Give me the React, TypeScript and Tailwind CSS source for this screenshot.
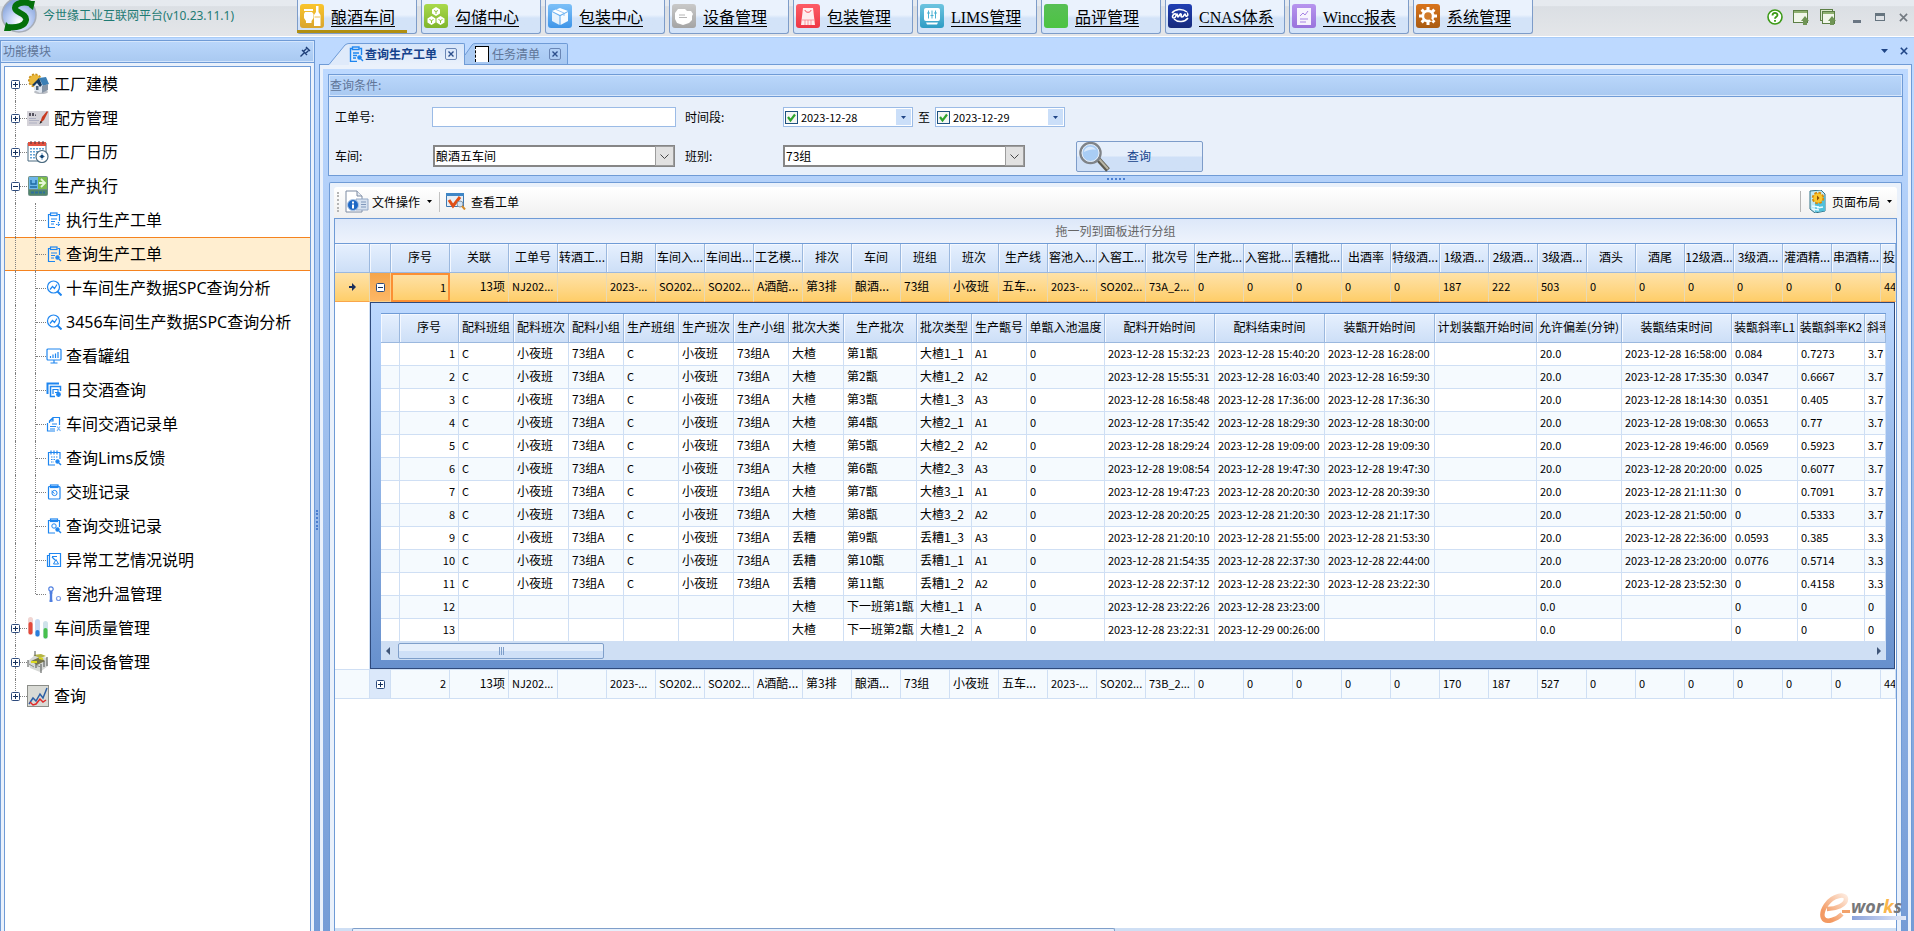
import { type ReactNode, useState } from "react";
import clsx from "clsx";

const fontUi = "font-['Noto_Sans_CJK_SC',sans-serif]";
const fontTree = "font-['Noto_Sans','Noto_Sans_CJK_SC',sans-serif]";
const fontMenu = "font-['Liberation_Serif','Noto_Sans_CJK_SC',serif]";

/* ---------- top menu ---------- */

const menuItems: { title: string; color: string; icon: ReactNode }[] = [
  {
    title: "酿酒车间",
    color: "from-[#fac52d] to-[#d9a52e]",
    icon: (
      <>
        <path d="M4 5h9v2h-9zM5 8h7l1.500 2v4l-2 3v2H6v-2l-2-3v-4z" />
        <path d="M16 2h2.500v6l2 3v11h-6.500V11l2-3z" />
        <path d="M14.500 13h5.500" stroke="#e6b02d" strokeWidth="0.8" />
      </>
    ),
  },
  {
    title: "勾储中心",
    color: "from-[#a9d94b] to-[#7fb52c]",
    icon: (
      <>
        <path d="M12 3l4 2.500v4L12 12 8 9.500v-4z" />
        <path d="M7.500 12l4 2.500v4l-4 2.500-4-2.500v-4z" />
        <path d="M16.500 12l4 2.500v4l-4 2.500-4-2.500v-4z" />
        <path d="M10 6.500l2 1 2-1M12 7.500V10M5.500 15.500l2 1 2-1M7.500 16.500V19M14.500 15.500l2 1 2-1M16.500 16.500V19" stroke="#8dc236" strokeWidth="1" fill="none" />
      </>
    ),
  },
  {
    title: "包装中心",
    color: "from-[#7cc0f8] to-[#3e95e8]",
    icon: (
      <>
        <path d="M12 4l8 3-8 4-8-4z" />
        <path d="M4 8l7.500 4v9L4 17z" opacity="0.85" />
        <path d="M20 8l-7.500 4v9l7.500-4z" opacity="0.95" />
        <path d="M8 5.500l8 3.500v3" stroke="#7cb9f2" strokeWidth="0.8" fill="none" />
      </>
    ),
  },
  {
    title: "设备管理",
    color: "from-[#c9c9c9] to-[#a4a4a4]",
    icon: (
      <>
        <path d="M6 5h7l2 2h4l2 3-1 2v4l-3 3-6 2-6-2-2-4V9z" />
        <path d="M7 11h6M7 13.500h8" stroke="#b5b5b5" strokeWidth="1" />
      </>
    ),
  },
  {
    title: "包装管理",
    color: "from-[#fd5c66] to-[#ee3545]",
    icon: (
      <>
        <path d="M7 4h10l2 17H5z" opacity="0.9" />
        <path d="M9 6c0 3 6 3 6 0" stroke="#f7505d" strokeWidth="1" fill="none" />
        <path d="M6 16h12M9 16v5M12 16v5M15 16v5" stroke="#f7808a" strokeWidth="0.8" />
      </>
    ),
  },
  {
    title: "LIMS管理",
    color: "from-[#6cc4e0] to-[#2c9cc4]",
    icon: (
      <>
        <rect x="4" y="4" width="16" height="13" rx="2" />
        <path d="M6 18.500h12l-1 2H7z" />
        <path d="M8.500 6.500v8M12 6.500v8M15.500 6.500v8M7 9h3M10.500 11.500h3M14 9h3" stroke="#4bb0d2" strokeWidth="1" />
      </>
    ),
  },
  { title: "品评管理", color: "from-[#58bf55] to-[#4cc442]", icon: null },
  {
    title: "CNAS体系",
    color: "from-[#1f3fb4] to-[#172a7c]",
    icon: (
      <>
        <path d="M4 9c3-4 10-5 15-1M20 14c-3 4-10 5-14 1" stroke="#fff" strokeWidth="1.500" fill="none" />
        <path d="M8 10c-3-1-5 4-2 4 2 0 2-4 3-4s0 3 1 3 2-4 3-3-1 3 1 3 2-3 3-3 0 3 2 2 0-3 1-3" stroke="#fff" strokeWidth="1.600" fill="none" />
      </>
    ),
  },
  {
    title: "Wincc报表",
    color: "from-[#b794ee] to-[#9973dc]",
    icon: (
      <>
        <rect x="5" y="4" width="14" height="17" opacity="0.9" />
        <path d="M8 12l3-3 2 2 3-4M8 15h8M8 18h6" stroke="#a682e4" strokeWidth="1" fill="none" />
      </>
    ),
  },
  {
    title: "系统管理",
    color: "from-[#d9741c] to-[#a95b12]",
    icon: (
      <>
        <g stroke="#fff" strokeWidth="3">
          <path d="M12 3v18M3 12h18M5.600 5.600l12.800 12.800M18.400 5.600L5.600 18.400" />
        </g>
        <circle cx="12" cy="12" r="6.500" />
        <circle cx="12" cy="12" r="3.800" fill="#d07a2a" />
        <path d="M13 13l3 4" stroke="#d07a2a" strokeWidth="2" />
      </>
    ),
  },
];

function Logo() {
  return (
    <svg className="h-[34px] w-[38px] shrink-0" viewBox="0 0 38 34">
      <defs>
        <radialGradient id="orb" cx="50%" cy="70%" r="60%">
          <stop offset="0" stopColor="#ffffff" />
          <stop offset="0.6" stopColor="#b9ccf3" />
          <stop offset="1" stopColor="#8ea9dd" />
        </radialGradient>
      </defs>
      <circle cx="19" cy="15" r="17" fill="url(#orb)" stroke="#a7adb8" strokeWidth="1.500" />
      <path
        d="M31 4C24 1 15 3 15 8c0 5 12 5 11 12-1 6-9 8-18 7"
        fill="none"
        stroke="#04700c"
        strokeWidth="6"
      />
      <path d="M29 1l6 0-2 9-4-3zM4 31l2-9 3 3 2 6z" fill="#04700c" />
    </svg>
  );
}

function TopBar() {
  return (
    <header className="flex h-[38px] shrink-0 items-start border-b border-[#a9ccf7] bg-linear-to-b from-[#e6eaef] from-15% via-[#dbdfe4] via-18% to-[#e4e6e9] shadow-[inset_0_-1px_0_#fff]">
      <Logo />
      <h1 className="ml-[5px] w-[254px] shrink-0 text-[12px] leading-8 text-[#1e7b74] font-['Noto_Sans','Noto_Sans_CJK_SC',sans-serif]">
        今世缘工业互联网平台(v10.23.11.1)
      </h1>
      <nav className="flex gap-1">
        {menuItems.map((item, i) => (
          <a
            key={item.title}
            href="#"
            className="relative flex h-[34px] w-[120px] shrink-0 items-center rounded-b-[3px] border border-t-0 border-[#7d9cc9] bg-linear-to-b from-[#eaf2fd] from-45% to-[#d3e3f8] to-55% pl-[2px]"
          >
            <span className={clsx("mb-px flex size-6 items-center justify-center rounded-[3px] bg-linear-to-b", item.color)}>
              <svg className="size-6" viewBox="0 0 24 24" fill="#fff">{item.icon}</svg>
            </span>
            <span className={clsx("ml-[7px] mt-[2px] border-b border-black text-[16px] leading-[17px] text-black", fontMenu)}>
              {item.title}
            </span>
            {i === 0 && <span className="absolute -left-px bottom-0 h-[3px] w-[110px] bg-[#b08f12]" />}
          </a>
        ))}
      </nav>
      <div className="ml-auto flex h-[34px] items-center pr-[6px]">
        <button aria-label="帮助" className="mr-[10px]">
          <svg className="size-4" viewBox="0 0 16 16" fill="none">
            <circle cx="8" cy="8" r="7" fill="#fff" stroke="#3c9a17" strokeWidth="1.600" />
            <path d="M5.500 6.500c0-3.500 5-3.200 5-.4 0 1.700-2.500 1.700-2.500 3.700M8 11v1.700" stroke="#3c9a17" strokeWidth="1.800" />
          </svg>
        </button>
        <button aria-label="窗口" className="mr-[11px]">
          <svg className="size-4" viewBox="0 0 16 16">
            <rect x="0.500" y="1.500" width="14" height="12" fill="#f1f6ea" stroke="#5c7f45" />
            <path d="M1 2h13v2H1z" fill="#8fb070" />
            <path d="M12 7l4 5h-2v4h-4v-4H8z" fill="#6f9455" />
          </svg>
        </button>
        <button aria-label="全部窗口" className="mr-[17px]">
          <svg className="size-4" viewBox="0 0 16 16">
            <rect x="0.500" y="0.500" width="12" height="11" fill="#dbe8cd" stroke="#5c7f45" />
            <rect x="2.500" y="2.500" width="12" height="12" fill="#f1f6ea" stroke="#5c7f45" />
            <path d="M3 3h11v2H3z" fill="#8fb070" />
            <path d="M12 7l4 5h-2v4h-4v-4H8z" fill="#6f9455" />
          </svg>
        </button>
        <button aria-label="最小化" className="mr-[14px] h-3 w-2">
          <span className="mt-2 block h-[3px] bg-[#6a7683]" />
        </button>
        <button aria-label="最大化" className="mr-[14px] h-2 w-[10px] border border-t-[3px] border-[#66747f]" />
        <button aria-label="关闭">
          <svg className="size-[9px]" viewBox="0 0 10 10" stroke="#737a82" strokeWidth="1.800">
            <path d="M1 1l8 8M9 1L1 9" />
          </svg>
        </button>
      </div>
    </header>
  );
}

/* ---------- side tree ---------- */

const lens = (
  <>
    <circle cx="11.500" cy="11.500" r="1.600" fill="#1e86f0" />
    <path d="M13 13l2 2" strokeWidth="1.400" />
  </>
);

const clip = (
  <>
    <path d="M4 2.500H2.500v13H9M11.500 2.500H13.500V9" />
    <rect x="4.500" y="1" width="6.500" height="2.500" />
    <path d="M5 7h6M5 9.500h4M5 12h3" />
  </>
);

const childItems: { title: string; icon: ReactNode }[] = [
  { title: "执行生产工单", icon: <>{clip}<path d="M10 12.500h5M12.500 10v5" strokeDasharray="1.500 1" /></> },
  { title: "查询生产工单", icon: <>{clip}{lens}</> },
  { title: "十车间生产数据SPC查询分析", icon: <><circle cx="7.500" cy="7" r="6" /><path d="M11.500 11.500l4 4" strokeWidth="2" /><path d="M4 9.500l2.500-3 2 2 2.500-4" /></> },
  { title: "3456车间生产数据SPC查询分析", icon: <><circle cx="7.500" cy="7" r="6" /><path d="M11.500 11.500l4 4" strokeWidth="2" /><path d="M4 9.500l2.500-3 2 2 2.500-4" /></> },
  { title: "查看罐组", icon: <><rect x="1" y="1" width="14" height="11" rx="1" /><path d="M8 12v3M4.500 15h7M4.500 10V8M7 10V6.500M9.500 10V5.500M12 10V4" /></> },
  { title: "日交酒查询", icon: <><path d="M1.500 12V1.500H13" strokeWidth="2" /><path d="M14.500 9V4.500h-10v10H9" strokeWidth="1.500" /><path d="M7 12V7.500h5v3H9" /><circle cx="12.500" cy="12.500" r="1.800" fill="#1e86f0" /></> },
  { title: "车间交酒记录单", icon: <><path d="M13.500 9V1.500H7L3.500 5v2M7 1.500V5H3.500" /><path d="M1.500 7v8H9M6 8h5M4 10.500h6M4 13h5" /><path d="M11 10.500l3.500 4.500M14 10.500L11 15" opacity=".6" /></> },
  { title: "查询Lims反馈", icon: <><path d="M9 15H2.500V2.500h11.500V9" /><path d="M5 .5v4M8 .5v4M11 .5v4" /><path d="M5 7h7M5 9.500h4M5 12h3" strokeDasharray="1.500 1" />{lens}</> },
  { title: "交班记录", icon: <><rect x="2.500" y="2.500" width="11.500" height="12.500" rx="1" /><rect x="4.500" y="1" width="7.500" height="2.500" /><circle cx="8.500" cy="9" r="2.600" strokeWidth="1" /><path d="M5.500 7l3 2.500" strokeWidth="1" /></> },
  { title: "查询交班记录", icon: <><path d="M9 15H2.500V2.500h11V9" /><rect x="4.500" y="1" width="7" height="2.500" /><circle cx="8" cy="8" r="2.200" strokeWidth="1" />{lens}</> },
  { title: "异常工艺情况说明", icon: <><path d="M3.500 1.500h11v13h-13v-11h2z" /><path d="M3.500 3.500v11M6 4.500h5M6 5l3 3" /><path d="M10 7.500l2.500 4.500h-5z" strokeWidth="1" /></> },
  { title: "窖池升温管理", icon: <><circle cx="5" cy="3" r="2.200" stroke="#4f7fe0" /><path d="M5 5v9M3.500 6.500h3M3.500 15h3" stroke="#4f7fe0" strokeWidth="2.400" /><circle cx="12.500" cy="12.500" r="2" stroke="#7f9fe8" /></> },
];

const rootIcons: Record<string, ReactNode> = {
  工厂建模: (
    <>
      <circle cx="8" cy="7.500" r="6" fill="#e6b02c" stroke="#c98f1a" strokeWidth="2" strokeDasharray="2 1.500" />
      <circle cx="8" cy="7.500" r="5.500" fill="#ebb93c" />
      <ellipse cx="14" cy="19" rx="7" ry="2" fill="#b9bdc4" />
      <path d="M7 12l5-5 9 3v7l-8 3-6-3z" fill="#dfe6ef" />
      <path d="M5 12l7-7 3 7-2 2-3-4-3 3z" fill="#17395f" />
      <path d="M12 5l7-1 3 7-6 2z" fill="#3b7fb5" />
      <path d="M15 13l6-2v6l-6 3z" fill="#8795a6" />
      <path d="M9 13h2.500v4H9z" fill="#50657c" />
    </>
  ),
  配方管理: (
    <>
      <path d="M0 4h22v15H0z" fill="#d5d3d9" />
      <path d="M2 6h2v3H2zM5 6h2v3H5zM8 7.500h1V9H8z" fill="#55525e" />
      <path d="M2 11.500h7M2 13.500h10M2 16h8" stroke="#aeb0c2" />
      <path d="M20 4l-5 6-2 6 4-3 4-8z" fill="#c93a1f" />
      <path d="M12.500 17l1-3 2 1z" fill="#222" />
    </>
  ),
  工厂日历: (
    <>
      <path d="M1 2h18v18H1z" fill="#fff" stroke="#4b6b80" />
      <path d="M1 1h18v4H1z" fill="#e2513f" />
      <path d="M4 0v3M8 0v3M12 0v3M16 0v3" stroke="#55323a" />
      <path d="M4 7v11M7 7v11M10 7v8M13 7v2M16 7v2" stroke="#3186c9" strokeWidth="1.500" strokeDasharray="1.500 1.500" />
      <circle cx="15" cy="15.500" r="6" fill="#fff" stroke="#4b6b80" strokeWidth="1.200" />
      <path d="M15 12v7" stroke="#6fa3cf" />
      <path d="M12 15.500h6" stroke="#8fb5d6" />
      <circle cx="15" cy="15.500" r="1.800" fill="#12436f" />
    </>
  ),
  生产执行: (
    <>
      <rect x="1" y="1" width="20" height="20" rx="2" fill="#6e8f86" />
      <rect x="2" y="2" width="9" height="12" fill="#6db7ea" />
      <rect x="11" y="2" width="9" height="12" fill="#7dbd4d" />
      <path d="M4 5v4h5V5M3 12h7" stroke="#1e6aa0" strokeWidth="1.400" fill="none" />
      <path d="M12 8h5M14 4l4 4-4 4" stroke="#e6f7d8" strokeWidth="1.800" fill="none" />
      <path d="M2 15h18v5H2z" fill="#51876b" />
      <path d="M4 17.500h14" stroke="#2f6f9c" strokeWidth="2" strokeDasharray="3 1" />
    </>
  ),
  车间质量管理: (
    <>
      <rect x="1" y="0" width="5" height="18" rx="2.500" fill="#f0d5d2" />
      <rect x="1.500" y="5" width="4" height="12.500" rx="2" fill="#e2493b" />
      <rect x="8" y="2" width="5" height="18" rx="2.500" fill="#c6daf2" />
      <rect x="8.500" y="13" width="4" height="6.500" rx="2" fill="#2a7fdc" />
      <rect x="16" y="4" width="5" height="18" rx="2.500" fill="#cfe3ea" />
      <rect x="16.500" y="11" width="4" height="10.500" rx="2" fill="#47c04d" />
    </>
  ),
  车间设备管理: (
    <>
      <path d="M1 10l7-6 12 3 1 8-8 6-10-4z" fill="#d6d8d6" />
      <path d="M4 10l9-4 5 4-8 4z" fill="#77764a" />
      <path d="M6 4l8-1 5 2-6 2z" fill="#b5b544" />
      <path d="M4 11h6M12 7l4 1" stroke="#d9d722" strokeWidth="2" />
      <path d="M8 0v5M1 9v7M14 13v9M20 6v9M9 13v4M17 10v6" stroke="#4d514e" />
      <path d="M8 14l6 2M2 13l5 3" stroke="#8c8f8c" />
    </>
  ),
  查询: (
    <>
      <rect x="0.500" y="0.500" width="21" height="21" fill="#d9dad5" stroke="#8b8d88" />
      <path d="M2 19l4-6 3 3 4-7 3 4 4-10" stroke="#2c5fa5" strokeWidth="1.500" fill="none" />
      <path d="M3 17l3 3 3-1 4-5 3 3 3-2" stroke="#e02a2a" strokeWidth="1.500" fill="none" />
    </>
  ),
};

function Expander({ open }: { open?: boolean }) {
  return (
    <svg className="size-[9px] shrink-0" viewBox="0 0 9 9">
      <rect x="0.500" y="0.500" width="8" height="8" rx="1" fill="#fff" stroke="#2d4a7c" />
      <path d={open ? "M2 4.500h5" : "M2 4.500h5M4.500 2v5"} stroke="#15305c" />
    </svg>
  );
}

function RootNode({ title, open, first, last }: { title: string; open?: boolean; first?: boolean; last?: boolean }) {
  return (
    <li className="relative flex h-[34px] items-center pl-[6px]">
      {!first && <span className="absolute left-[10px] top-0 h-[12px] border-l border-dotted border-[#808080]" />}
      {!last && <span className="absolute bottom-0 left-[10px] top-[22px] border-l border-dotted border-[#808080]" />}
      <Expander open={open} />
      <span className="w-[7px] border-t border-dotted border-[#808080]" />
      <svg className="size-[22px] shrink-0" viewBox="0 0 22 22">{rootIcons[title]}</svg>
      <span className="ml-[5px]">{title}</span>
    </li>
  );
}

function SideBar() {
  return (
    <aside className="mt-[2px] flex w-[315px] shrink-0 flex-col border-x border-t border-[#6f9bd6] bg-[#eaf1fb]">
      <div className="flex h-[22px] items-center justify-between border-b border-[#6f9bd6] bg-linear-to-b from-[#bad7fb] to-[#a9c9f1] pb-px pl-[2px] pr-[3px] text-[#5f7598] shadow-[inset_0_0_0_1px_#d5e6fc]">
        <span>功能模块</span>
        <button aria-label="固定">
          <svg className="size-[11px]" viewBox="0 0 11 11" fill="none" stroke="#1f3f78" strokeWidth="1.400">
            <path d="M6 1l4 4M7 2L3.500 5.500l2 2L9 4M2 4l5 5M4 7l-3.500 3.500" />
          </svg>
        </button>
      </div>
      <ul className={clsx("mx-[3px] mt-[3px] flex-1 border border-b-0 border-[#6f9bd6] bg-white text-[16px] leading-6 text-black", fontTree)}>
        <RootNode title="工厂建模" first />
        <RootNode title="配方管理" />
        <RootNode title="工厂日历" />
        <RootNode title="生产执行" open />
        {childItems.map((item, i) => (
          <li
            key={item.title}
            className={clsx(
              "relative flex h-[34px] items-center pl-[31px]",
              i === 1 && "bg-[#ffeed0] shadow-[inset_0_1px_0_#f5831f,inset_0_-1px_0_#f5831f]",
            )}
          >
            <span className="absolute inset-y-0 left-[10px] border-l border-dotted border-[#808080]" />
            <span
              className={clsx(
                "absolute left-[30px] top-0 border-l border-dotted border-[#808080]",
                i === childItems.length - 1 ? "h-[17px]" : "h-[34px]",
              )}
            />
            <span className="w-[10px] border-t border-dotted border-[#808080]" />
            <svg className="size-4 shrink-0" viewBox="0 0 16 16" fill="none" stroke="#1e86f0" strokeWidth="1.200">
              {item.icon}
            </svg>
            <a href="#" className="ml-1 whitespace-nowrap">{item.title}</a>
          </li>
        ))}
        <RootNode title="车间质量管理" />
        <RootNode title="车间设备管理" />
        <RootNode title="查询" last />
      </ul>
    </aside>
  );
}

/* ---------- tabs ---------- */

function CloseBox() {
  return (
    <button aria-label="关闭" className="flex size-3 items-center justify-center rounded-[2px] border border-[#6a86b5]">
      <svg className="size-[6px]" viewBox="0 0 6 6" stroke="#2c4f8c" strokeWidth="1.400">
        <path d="M.5.5l5 5M5.500.5l-5 5" />
      </svg>
    </button>
  );
}

function TabBar() {
  return (
    <div className="flex h-[27px] shrink-0 items-end">
      <div className="h-full w-[10px] border-b border-[#6f9bd6]" />
      <svg className="h-[22px] w-5 shrink-0" viewBox="0 0 20 22">
        <path d="M0 22L16 2Q18 .5 20 .5V22z" fill="#dfeafa" />
        <path d="M0 21.500L16 2Q18 .5 20 .5" fill="none" stroke="#6f9bd6" />
      </svg>
      <div className="flex h-[22px] w-[116px] items-center border-r border-t border-[#6f9bd6] rounded-tr-[2px] bg-linear-to-b from-[#d6e5fa] to-[#eaf1fb] pb-px text-[#15428b]">
        <svg className="mr-px h-4 w-[15px]" viewBox="1 0 15 16" fill="none" stroke="#1e86f0" strokeWidth="1.400">{clip}{lens}</svg>
        <span className="mr-2 font-bold">查询生产工单</span>
        <CloseBox />
      </div>
      <svg className="h-[22px] w-[10px] shrink-0" viewBox="0 0 10 22">
        <path d="M0 12L7 2Q8 .5 10 .5V22H0z" fill="#abcbf3" />
        <path d="M0 12L7 2Q8 .5 10 .5M0 21.500h10" fill="none" stroke="#6f9bd6" />
      </svg>
      <div className="flex h-[22px] w-[93px] items-center rounded-tr-[2px] border border-l-0 border-[#6f9bd6] bg-linear-to-b from-[#b5d3f9] to-[#a6c7f1] text-[#5f7598]">
        <span className="mr-[3px] h-4 w-[14px] border-l border-dashed border-black bg-white shadow-[inset_0_1px_0_#000,inset_-1px_0_0_#000]" />
        <span className="mr-[9px]">任务清单</span>
        <CloseBox />
      </div>
      <div className="flex h-full flex-1 items-center justify-end gap-3 border-b border-[#6f9bd6] pr-1">
        <button aria-label="标签列表">
          <svg className="h-1 w-[7px]" viewBox="0 0 7 4"><path d="M0 0h7L3.500 4z" fill="#1f4586" /></svg>
        </button>
        <button aria-label="关闭标签">
          <svg className="size-[8px]" viewBox="0 0 10 10" stroke="#1f4586" strokeWidth="2"><path d="M1 1l8 8M9 1L1 9" /></svg>
        </button>
      </div>
    </div>
  );
}

/* ---------- query form ---------- */

function DateBox({ id, value }: { id: string; value: string }) {
  const [on, setOn] = useState(true);
  return (
    <span className="flex h-5 w-[130px] items-center border border-[#9bbbe6] bg-white pl-px">
      <span className="relative flex size-[13px] shrink-0">
        <input
          type="checkbox"
          aria-label="启用日期"
          checked={on}
          onChange={(e) => setOn(e.target.checked)}
          className="size-[13px] appearance-none border border-[#1d5180] bg-[#f3f5f3]"
        />
        {on && (
          <svg className="pointer-events-none absolute inset-0 size-[13px]" viewBox="0 0 13 13" fill="none" stroke="#2fa32d" strokeWidth="2.200">
            <path d="M3 6l2.500 3.500L10 3.500" />
          </svg>
        )}
      </span>
      <input id={id} defaultValue={value} className="ml-[3px] min-w-0 flex-1 text-[11px] outline-none" />
      <button aria-label="选择日期" className="mr-px flex h-4 w-[15px] shrink-0 items-center justify-center bg-[#cbdff9]">
        <svg className="h-[3px] w-[5px]" viewBox="0 0 5 3"><path d="M0 0h5L2.500 3z" fill="#1f4586" /></svg>
      </button>
    </span>
  );
}

function SelectBox({ id, value }: { id: string; value: string }) {
  return (
    <span className="relative flex h-[22px] w-[242px]">
      <select id={id} defaultValue={value} className="w-full appearance-none border-2 border-[#868686] bg-white pl-px text-[12px] leading-[16px]">
        <option>{value}</option>
      </select>
      <span className="pointer-events-none absolute inset-y-px right-px flex w-[19px] items-center justify-center border border-[#9d9d9d] bg-[#e1e1e1]">
        <svg className="h-[5px] w-[9px]" viewBox="0 0 9 5" fill="none" stroke="#444"><path d="M.5.500l4 4 4-4" /></svg>
      </span>
    </span>
  );
}

function QueryPanel() {
  return (
    <section className="h-[102px] shrink-0 border border-[#6f9bd6] bg-[#e9f0fa]">
      <h2 className="h-[22px] border-b border-[#6f9bd6] bg-linear-to-b from-[#bad7fb] to-[#a9c9f1] pl-px leading-5 text-[#5f7598] shadow-[inset_0_0_0_1px_#d5e6fc]">
        查询条件:
      </h2>
      <form
        onSubmit={(e) => e.preventDefault()}
        className="grid grid-cols-[98px_252px_98px_293px_127px] grid-rows-[20px_22px] items-center gap-y-[18px] pl-[6px] pt-[10px]"
      >
        <label htmlFor="order-no">工单号:</label>
        <input id="order-no" className="-ml-px h-5 w-[244px] border border-[#9bbbe6] bg-white px-1 outline-none" />
        <label htmlFor="date-from">时间段:</label>
        <div className="col-span-2 flex items-center gap-[5px]">
          <DateBox id="date-from" value="2023-12-28" />
          <label htmlFor="date-to">至</label>
          <DateBox id="date-to" value="2023-12-29" />
        </div>
        <label htmlFor="workshop">车间:</label>
        <SelectBox id="workshop" value="酿酒五车间" />
        <label htmlFor="team">班别:</label>
        <SelectBox id="team" value="73组" />
        <button className="flex h-[31px] items-center rounded-[2px] border border-[#7d9cc9] bg-linear-to-b from-[#e6effb] from-48% to-[#cfe0f7] to-52% text-[#15428b]">
          <svg className="ml-px h-[31px] w-8" viewBox="0 0 32 31">
            <path d="M20 18l10 11" stroke="#5c5a50" strokeWidth="5" />
            <path d="M21 18l9 10" stroke="#b9b6a6" strokeWidth="2" />
            <circle cx="12.500" cy="12" r="10" fill="#a9cdf5" stroke="#7f8388" strokeWidth="2.500" />
            <circle cx="12.500" cy="12" r="8.500" fill="none" stroke="#e8eef5" />
            <path d="M6 11c1-6 9-7 12-2-4-1-8 0-12 2z" fill="#dbeafc" />
          </svg>
          <span className="ml-[17px]">查询</span>
        </button>
      </form>
    </section>
  );
}

/* ---------- grids ---------- */

const orderColumns = [
  "工单号", "转酒工...", "日期", "车间入...", "车间出...", "工艺模...", "排次", "车间", "班组", "班次",
  "生产线", "窖池入...", "入窖工...", "批次号", "生产批...", "入窖批...", "丢糟批...", "出酒率", "特级酒...", "1级酒...",
  "2级酒...", "3级酒...", "酒头", "酒尾", "12级酒...", "3级酒...", "灌酒精...", "串酒精...",
];

const orderRow = (batch: string, l1: string, l2: string, l3: string) => [
  "NJ202...", "", "2023-...", "SO202...", "SO202...", "A酒醅...", "第3排", "酿酒...", "73组", "小夜班",
  "五车...", "2023-...", "SO202...", batch, "0", "0", "0", "0", "0", l1,
  l2, l3, "0", "0", "0", "0", "0", "0", "44",
];

const detailColumns: [string, string][] = [
  ["", "w-[19px]"],
  ["序号", "w-[59px]"],
  ["配料班组", "w-[55px]"],
  ["配料班次", "w-[55px]"],
  ["配料小组", "w-[55px]"],
  ["生产班组", "w-[55px]"],
  ["生产班次", "w-[55px]"],
  ["生产小组", "w-[55px]"],
  ["批次大类", "w-[55px]"],
  ["生产批次", "w-[73px]"],
  ["批次类型", "w-[55px]"],
  ["生产甑号", "w-[55px]"],
  ["单甑入池温度", "w-[78px]"],
  ["配料开始时间", "w-[110px]"],
  ["配料结束时间", "w-[110px]"],
  ["装甑开始时间", "w-[110px]"],
  ["计划装甑开始时间", "w-[102px]"],
  ["允许偏差(分钟)", "w-[85px]"],
  ["装甑结束时间", "w-[110px]"],
  ["装甑斜率L1", "w-[66px]"],
  ["装甑斜率K2", "w-[67px]"],
  ["斜率", ""],
];

// 大类, 批次, 类型, 甑号, 配料开始, 配料结束, 装甑开始, 装甑结束, L1, K2, 斜率
const detailData = [
  ["大楂", "第1甑", "大楂1_1", "A1", "15:32:23", "15:40:20", "16:28:00", "16:58:00", "0.084", "0.7273", "3.7"],
  ["大楂", "第2甑", "大楂1_2", "A2", "15:55:31", "16:03:40", "16:59:30", "17:35:30", "0.0347", "0.6667", "3.7"],
  ["大楂", "第3甑", "大楂1_3", "A3", "16:58:48", "17:36:00", "17:36:30", "18:14:30", "0.0351", "0.405", "3.7"],
  ["大楂", "第4甑", "大楂2_1", "A1", "17:35:42", "18:29:30", "18:30:00", "19:08:30", "0.0653", "0.77", "3.7"],
  ["大楂", "第5甑", "大楂2_2", "A2", "18:29:24", "19:09:00", "19:09:30", "19:46:00", "0.0569", "0.5923", "3.7"],
  ["大楂", "第6甑", "大楂2_3", "A3", "19:08:54", "19:47:30", "19:47:30", "20:20:00", "0.025", "0.6077", "3.7"],
  ["大楂", "第7甑", "大楂3_1", "A1", "19:47:23", "20:20:30", "20:39:30", "21:11:30", "0", "0.7091", "3.7"],
  ["大楂", "第8甑", "大楂3_2", "A2", "20:20:25", "21:20:30", "21:17:30", "21:50:00", "0", "0.5333", "3.7"],
  ["丢糟", "第9甑", "丢糟1_3", "A3", "21:20:10", "21:55:00", "21:53:30", "22:36:00", "0.0593", "0.385", "3.3"],
  ["丢糟", "第10甑", "丢糟1_1", "A1", "21:54:35", "22:37:30", "22:44:00", "23:20:00", "0.0776", "0.5714", "3.3"],
  ["丢糟", "第11甑", "丢糟1_2", "A2", "22:37:12", "23:22:30", "23:22:30", "23:52:30", "0", "0.4158", "3.3"],
  ["大楂", "下一班第1甑", "大楂1_1", "A", "23:22:26", "23:23:00", "", "", "0", "0", "0"],
  ["大楂", "下一班第2甑", "大楂1_2", "A", "23:22:31", "00:26:00", "", "", "0", "0", "0"],
];

const detailRows = detailData.map(([kind, batch, type, pot, s1, e1, s2, e2, l1, k2, k], i) => {
  const next = i > 10;
  const at = (t: string) => (t ? `${t < "01" ? "2023-12-29" : "2023-12-28"} ${t}` : "");
  const team = next ? ["", "", ""] : ["C", "小夜班", "73组A"];
  return [...team, ...team, kind, batch, type, pot, "0", at(s1), at(e1), at(s2), "", next ? "0.0" : "20.0", at(e2), l1, k2, k];
});

// plain latin values are set one size smaller than chinese ones
const cellSize = (text: string) => (/[\u4e00-\u9fff]/.test(text) ? "text-[12px]" : "text-[11px]");

function Head({ children, start }: { children?: ReactNode; start?: boolean }) {
  return (
    <th
      className={clsx(
        "overflow-hidden whitespace-nowrap border-b border-r border-[#9bb8de] bg-linear-to-b from-[#e6f0fe] to-[#cddff7] p-0 pb-[2px] font-normal shadow-[inset_1px_1px_0_#f4f8ff]",
        start ? "pl-[2px] text-left" : "text-center",
      )}
    >
      {children}
    </th>
  );
}

function Cell({ text, right, className }: { text: string; right?: boolean; className?: string }) {
  return (
    <td
      className={clsx(
        "overflow-hidden whitespace-nowrap border-b border-r border-[#cfdff4] p-0 pb-[2px]",
        right ? "pr-[3px] text-right" : "pl-[3px]",
        cellSize(text),
        className,
      )}
    >
      {text}
    </td>
  );
}

function DetailTable() {
  return (
    <div className="border border-[#2f4a7c] bg-linear-to-b from-[#bdd9ff] to-[#6790cd] px-[10px] pb-[8px] pt-[10px] pr-2">
      <table className="w-full table-fixed border-separate border-spacing-0 border-t border-[#6f9bd6] bg-white">
        <colgroup>
          {detailColumns.map(([title, width]) => (
            <col key={title} className={width} />
          ))}
        </colgroup>
        <thead>
          <tr className="h-[29px]">
            {detailColumns.map(([title]) => (
              <Head key={title} start={title === "斜率"}>{title}</Head>
            ))}
          </tr>
        </thead>
        <tbody>
          {detailRows.map((row, i) => (
            <tr key={i} className={clsx("h-[23px]", i % 2 === 1 && "bg-[#f5fafe]")}>
              <Cell text="" />
              <Cell text={String(i + 1)} right />
              {row.map((text, j) => (
                <Cell key={j} text={text} />
              ))}
            </tr>
          ))}
        </tbody>
      </table>
      <div className="flex h-[18px] items-center bg-[#cfdff4] px-[5px]">
        <svg className="h-2 w-1" viewBox="0 0 4 8"><path d="M4 0v8L0 4z" fill="#3f5578" /></svg>
        <div className="ml-2 flex h-4 w-[206px] items-center justify-center gap-px rounded-[2px] border border-[#7f9fca] bg-linear-to-b from-[#e6effb] from-48% to-[#cfe0f7] to-52%">
          <span className="h-2 w-px bg-[#7f9fca]" />
          <span className="h-2 w-px bg-[#7f9fca]" />
          <span className="h-2 w-px bg-[#7f9fca]" />
        </div>
        <svg className="ml-auto h-2 w-1" viewBox="0 0 4 8"><path d="M0 0v8l4-4z" fill="#3f5578" /></svg>
      </div>
    </div>
  );
}

function OrderTable() {
  const amber = "border-b-[#f9a64a] border-r-[#e9d9b4]";
  return (
    <table className="w-full table-fixed border-separate border-spacing-0">
      <colgroup>
        <col className="w-[35px]" />
        <col className="w-[21px]" />
        <col className="w-[59px]" />
        <col className="w-[59px]" />
        {orderColumns.map((_, i) => (
          <col key={i} className="w-[49px]" />
        ))}
        <col />
      </colgroup>
      <thead>
        <tr className="h-[29px]">
          <Head />
          <Head />
          <Head>序号</Head>
          <Head>关联</Head>
          {orderColumns.map((title, i) => (
            <Head key={i}>{title}</Head>
          ))}
          <Head start>投</Head>
        </tr>
      </thead>
      <tbody>
        <tr className="h-[29px] bg-linear-to-b from-[#fee2a8] to-[#fecd66]">
          <td className={clsx("border-b border-r p-0", amber)}>
            <svg className="mx-auto h-2 w-[7px]" viewBox="0 0 7 8"><path d="M0 3h3V0l4 4-4 4V5H0z" fill="#1b2f5c" /></svg>
          </td>
          <td className="border-b border-r border-[#fbd08c] bg-linear-to-b from-[#f5a54b] to-[#fdb765] p-0">
            <button aria-label="收起" className="mx-auto block w-[9px]"><Expander open /></button>
          </td>
          <td className="border-2 border-[#fb8f33] p-0 pb-[2px] pr-[2px] text-right text-[11px]">1</td>
          <Cell text="13项" right className={amber} />
          {orderRow("73A_2...", "187", "222", "503").map((text, i) => (
            <Cell key={i} text={text} className={amber} />
          ))}
        </tr>
        <tr>
          <td className="border-b border-r border-[#cfdff4] p-0" />
          <td colSpan={32} className="border-b border-[#cfdff4] p-0 pr-px">
            <DetailTable />
          </td>
        </tr>
        <tr className="h-[29px] bg-[#f5fafe]">
          <Cell text="" />
          <td className="border-b border-r border-[#cfdff4] bg-[#dbe8fa] p-0">
            <button aria-label="展开" className="mx-auto block w-[9px]"><Expander /></button>
          </td>
          <Cell text="2" right />
          <Cell text="13项" right />
          {orderRow("73B_2...", "170", "187", "527").map((text, i) => (
            <Cell key={i} text={text} />
          ))}
        </tr>
      </tbody>
    </table>
  );
}

function ToolBar() {
  return (
    <div className="flex h-[31px] shrink-0 items-center rounded-t-[3px] bg-linear-to-b from-white to-[#f0f0f0] pb-[2px] pl-[3px] pr-[5px]">
      <span className="mr-[6px] h-5 border-l-2 border-dotted border-[#b5b5b5]" />
      <button className="flex items-center">
        <svg className="mr-[3px] h-[23px] w-6" viewBox="0 0 24 23">
          <path d="M1 1h11l5 5v16H1z" fill="#fff" stroke="#7c8ba3" />
          <path d="M12 1v5h5" fill="#e5ebf3" stroke="#7c8ba3" />
          <path d="M11 9h12v11H11z" fill="#d7e2f0" stroke="#93a8c6" />
          <path d="M16 12h5M16 14.500h5M16 17h5" stroke="#7f97ba" />
          <circle cx="8" cy="15" r="5.500" fill="#1d67c4" stroke="#a9c4e6" />
          <path d="M8 11.500v2M8 14.500v4" stroke="#fff" strokeWidth="2" />
        </svg>
        文件操作
        <svg className="ml-[7px] h-[3px] w-[5px]" viewBox="0 0 5 3"><path d="M0 0h5L2.500 3z" /></svg>
      </button>
      <span className="ml-[7px] mr-[6px] h-5 border-l border-[#c2c2c2]" />
      <button className="flex items-center">
        <svg className="mr-[5px] h-[17px] w-5" viewBox="0 0 20 17">
          <path d="M.5.5h17v13H.5z" fill="#e6eef6" stroke="#3f78b0" />
          <path d="M0 0h18v3H0z" fill="#3f86c6" />
          <path d="M3 7l4 6 7-9" stroke="#e04f16" strokeWidth="3" fill="none" />
          <circle cx="14" cy="11" r="3" fill="#cfe2f5" stroke="#8a949e" />
          <path d="M16 13l3 3.500" stroke="#d48a2a" strokeWidth="2" />
        </svg>
        查看工单
      </button>
      <span className="ml-auto mr-2 h-[21px] border-l border-[#b5b5b5]" />
      <button className="flex items-center">
        <svg className="mr-[6px] h-[23px] w-[17px]" viewBox="0 0 17 23">
          <path d="M1 1l11-1 4 4v17l-10 2-5-4z" fill="#bfe8f4" stroke="#2f7186" />
          <path d="M6 7l10-1v15l-10 1z" fill="#4fc0dc" />
          <path d="M3 16l7 1M3 19l7 1M8 18l6-1" stroke="#e9fbff" strokeWidth="1.500" />
          <circle cx="9" cy="8" r="5" fill="#f6b91c" stroke="#d8890c" strokeWidth="2.500" strokeDasharray="2.500 1.400" />
          <circle cx="9" cy="8" r="4.500" fill="#fbc62c" />
          <path d="M8 5.500v5l2.500-2.500z" fill="#8a4d05" />
        </svg>
        页面布局
        <svg className="ml-[7px] h-[3px] w-[5px]" viewBox="0 0 5 3"><path d="M0 0h5L2.500 3z" /></svg>
      </button>
    </div>
  );
}

function GridPanel() {
  return (
    <section className="ml-px mr-px flex min-h-0 flex-1 flex-col rounded-t-[2px] border border-b-0 border-[#6f9bd6] bg-[#eaf1fb] px-1 pt-1">
      <ToolBar />
      <div className="flex min-h-0 flex-1 flex-col overflow-hidden border border-b-0 border-[#6f9bd6] bg-white">
        <div className="h-[25px] shrink-0 border-b border-[#6f9bd6] bg-linear-to-b from-[#dde8f9] to-[#eef3fc] text-center leading-[23px] text-[#666]">
          拖一列到面板进行分组
        </div>
        <OrderTable />
        <div className="mt-auto flex h-[3px] shrink-0 bg-[#cfdff4] pl-[17px]">
          <span className="h-full w-[763px] rounded-t-[2px] border border-b-0 border-[#7f9fca] bg-[#e6effb]" />
        </div>
      </div>
    </section>
  );
}

function Watermark() {
  return (
    <svg className="absolute bottom-[6px] right-2 h-[32px] w-[88px]" viewBox="0 0 88 32">
      <defs>
        <linearGradient id="wm-e" x1="0" x2="1" y1="1" y2="0">
          <stop offset="0.2" stopColor="#f39a63" />
          <stop offset="1" stopColor="#fde9dc" />
        </linearGradient>
        <linearGradient id="wm-bar" x1="0" x2="1">
          <stop offset="0" stopColor="#8ba3dc" />
          <stop offset="1" stopColor="#e3eaf8" />
        </linearGradient>
      </defs>
      <path d="M9 16c9 0 19-4 19-10C28 0 15 2 8 12c-7 11-3 18 6 15 4-1 7-3 10-6" fill="none" stroke="url(#wm-e)" strokeWidth="4.500" />
      <path d="M24 17h8v3h-8z" fill="#f2a26b" />
      <path d="M34 23h54v4H34z" fill="url(#wm-bar)" />
      <text x="33" y="20" fontSize="18" fontWeight="bold" fontStyle="italic" fill="#77787a" fontFamily="Noto Sans, sans-serif">
        wor<tspan fill="#f9b54a">k</tspan>s
      </text>
    </svg>
  );
}

function App() {
  return (
    <div className={clsx("relative flex h-screen flex-col overflow-hidden bg-linear-to-b from-[#bdd9ff] from-12% to-[#759cd6] text-[12px] leading-4 text-black", fontUi)}>
      <TopBar />
      <div className="flex min-h-0 flex-1">
        <SideBar />
        <div className="relative w-1 shrink-0">
          <span className="absolute left-px top-[472px] h-5 border-l-2 border-dotted border-[#4c7fd0]" />
        </div>
        <main className="mr-[2px] flex min-w-0 flex-1 flex-col">
          <TabBar />
          <div className="flex min-h-0 flex-1 flex-col border-x border-[#6f9bd6] bg-[#eaf1fb] px-[3px] pt-1">
            <div className="flex min-h-0 flex-1 flex-col bg-linear-to-b from-[#bdd9ff] to-[#759cd6] px-[5px] pt-[5px]">
              <QueryPanel />
              <div className="flex h-[6px] shrink-0 items-center justify-center">
                <span className="w-[18px] border-t-2 border-dotted border-[#4c7fd0]" />
              </div>
              <GridPanel />
            </div>
          </div>
        </main>
      </div>
      <Watermark />
    </div>
  );
}

export default App;
